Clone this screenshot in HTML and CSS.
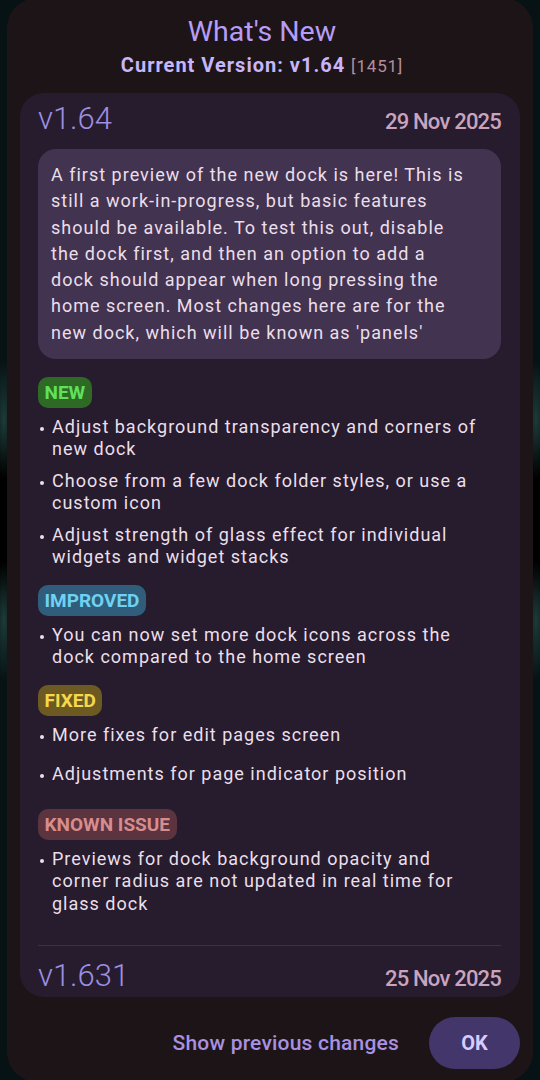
FILE: index.html
```html
<!DOCTYPE html>
<html lang="en">
<head>
<meta charset="utf-8">
<title>What's New</title>
<link rel="stylesheet" href="styles.css">
</head>
<body>
<div class="screen">
  <div class="dialog">
    <header class="head">
      <h1 class="title">What's New</h1>
      <div class="current">Current Version: v1.64 <span class="build">[1451]</span></div>
    </header>
    <div class="card">
      <div class="release-head">
        <span class="ver">v1.64</span>
        <span class="date">29 Nov 2025</span>
      </div>
      <p class="desc">A first preview of the new dock is here! This is still a work-in-progress, but basic features should be available. To test this out, disable the dock first, and then an option to add a dock should appear when long pressing the home screen. Most changes here are for the new dock, which will be known as 'panels'</p>

      <div class="section">
        <span class="tag tag-new">NEW</span>
        <ul class="items">
          <li>Adjust background transparency and corners of new dock</li>
          <li>Choose from a few dock folder styles, or use a custom icon</li>
          <li>Adjust strength of glass effect for individual widgets and widget stacks</li>
        </ul>
      </div>
      <div class="section">
        <span class="tag tag-improved">IMPROVED</span>
        <ul class="items">
          <li>You can now set more dock icons across the dock compared to the home screen</li>
        </ul>
      </div>
      <div class="section">
        <span class="tag tag-fixed">FIXED</span>
        <ul class="items">
          <li>More fixes for edit pages screen</li>
          <li>Adjustments for page indicator position</li>
        </ul>
      </div>
      <div class="section">
        <span class="tag tag-known">KNOWN ISSUE</span>
        <ul class="items">
          <li>Previews for dock background opacity and corner radius are not updated in real time for glass dock</li>
        </ul>
      </div>

      <hr class="divider">
      <div class="release-head">
        <span class="ver">v1.631</span>
        <span class="date">25 Nov 2025</span>
      </div>
    </div>
    <footer class="actions">
      <button class="btn-text">Show previous changes</button>
      <button class="btn-ok">OK</button>
    </footer>
  </div>
</div>
</body>
</html>
```
FILE: styles.css
```css
* { box-sizing: border-box; }
html, body {
  margin: 0;
  padding: 0;
}
body {
  width: 540px;
  height: 1080px;
  overflow: hidden;
  background: #000;
  font-family: Roboto, "Noto Sans", "Liberation Sans", sans-serif;
}
.screen {
  width: 540px;
  height: 1080px;
  overflow: hidden;
  background:
    radial-gradient(ellipse 14px 60px at 4px 420px, rgba(40, 80, 78, 0.7), transparent),
    radial-gradient(ellipse 14px 60px at 4px 620px, rgba(40, 80, 78, 0.7), transparent),
    radial-gradient(ellipse 14px 60px at 536px 420px, rgba(40, 80, 78, 0.7), transparent),
    radial-gradient(ellipse 14px 60px at 536px 620px, rgba(40, 80, 78, 0.7), transparent),
    linear-gradient(#071214, #071214 380px, #000 460px, #000 580px, #071214 660px, #071214);
}
.dialog {
  margin: -2px 7px 0;
  height: 1084px;
  border-radius: 30px;
  background: #1d1418;
  padding: 0 13px;
  display: flex;
  flex-direction: column;
}
.head {
  text-align: center;
  padding: 18px 16px 0 0;
  height: 95px;
}
.title {
  margin: 0;
  font-size: 28.5px;
  font-weight: 400;
  line-height: 32px;
  color: #b69df6;
}
.current {
  margin-top: 2px;
  font-size: 20px;
  font-weight: 700;
  line-height: 30px;
  color: #c7b6fb;
  letter-spacing: 1px;
}
.build {
  font-size: 17px;
  font-weight: 400;
  color: #b48f9a;
  letter-spacing: 0.8px;
}
.card {
  height: 904px;
  overflow: hidden;
  background: #261c2e;
  border-radius: 24px;
  padding: 6px 19px 0 18px;
}
.release-head {
  display: flex;
  justify-content: space-between;
  align-items: baseline;
  height: 50px;
}
.ver {
  font-size: 31px;
  font-weight: 300;
  color: #9d8fe2;
  line-height: 40px;
}
.date {
  font-size: 22px;
  font-weight: 500;
  color: #caa3be;
  letter-spacing: -0.8px;
}
.desc {
  margin: 0 0 18px;
  background: #423450;
  border-radius: 18px;
  padding: 13px 30px 13px 13px;
  font-size: 18px;
  line-height: 26.3px;
  color: #ebdeea;
  letter-spacing: 1px;
}
.section {
  margin-bottom: 12px;
}
.tag {
  display: inline-block;
  height: 31px;
  line-height: 31px;
  padding: 0 6.5px;
  border-radius: 10px;
  font-size: 19px;
  font-weight: 700;
}
.tag-new { background: #2e6a26; color: #5fe25a; }
.tag-improved { background: #2f5d7b; color: #6fd2f2; }
.tag-fixed { background: #6c5a22; color: #f6d84c; }
.tag-known { background: #5b3440; color: #d88c8c; }
.items {
  list-style: none;
  margin: 3px 0 0;
  padding: 0 8px 0 0;
}
.items li {
  position: relative;
  min-height: 39px;
  padding: 4.5px 0 4.5px 14px;
  font-size: 18px;
  line-height: 22.5px;
  color: #ebdfea;
  letter-spacing: 1px;
}
.items li::before {
  content: "";
  position: absolute;
  left: 2px;
  top: 16px;
  width: 4px;
  height: 4px;
  border-radius: 50%;
  background: #ebdfea;
}
.divider {
  margin: 25px 0 10px;
  border: 0;
  height: 1px;
  background: #3c3246;
}
.actions {
  display: flex;
  justify-content: flex-end;
  align-items: center;
  gap: 15px;
  padding-top: 20px;
}
.btn-text {
  border: 0;
  background: transparent;
  font-family: inherit;
  font-size: 21px;
  font-weight: 500;
  letter-spacing: 0.2px;
  color: #a791e0;
  padding: 0 15px;
  height: 52px;
}
.btn-ok {
  border: 0;
  width: 91px;
  height: 52px;
  border-radius: 26px;
  background: #43366b;
  font-family: inherit;
  font-size: 20px;
  font-weight: 700;
  color: #d8cbff;
}
```
